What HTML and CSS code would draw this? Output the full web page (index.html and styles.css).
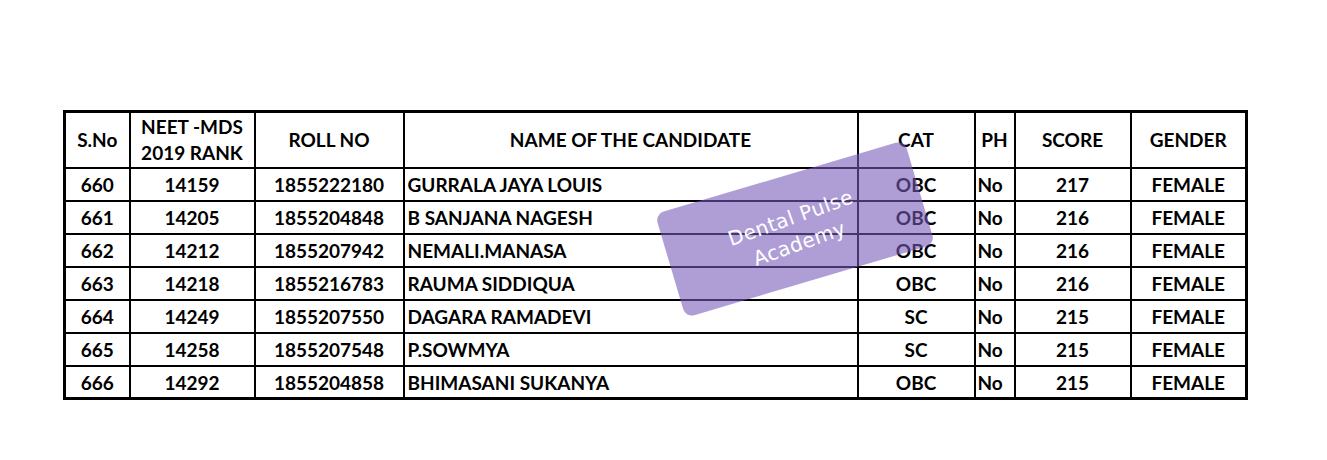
FILE: index.html
```html
<!DOCTYPE html>
<html>
<head>
<meta charset="utf-8">
<link rel="stylesheet" href="styles.css">
</head>
<body>
<div class="page">
  <table class="results">
    <colgroup>
      <col class="c-sno"><col class="c-rank"><col class="c-roll"><col class="c-name"><col class="c-cat"><col class="c-ph"><col class="c-score"><col class="c-gender">
    </colgroup>
    <thead>
      <tr class="head">
        <th>S.No</th>
        <th>NEET -MDS<br>2019 RANK</th>
        <th>ROLL NO</th>
        <th>NAME OF THE CANDIDATE</th>
        <th>CAT</th>
        <th>PH</th>
        <th>SCORE</th>
        <th>GENDER</th>
      </tr>
    </thead>
    <tbody>
      <tr><td>660</td><td>14159</td><td>1855222180</td><td class="name">GURRALA JAYA LOUIS</td><td>OBC</td><td class="ph">No</td><td>217</td><td>FEMALE</td></tr>
      <tr><td>661</td><td>14205</td><td>1855204848</td><td class="name">B SANJANA NAGESH</td><td>OBC</td><td class="ph">No</td><td>216</td><td>FEMALE</td></tr>
      <tr><td>662</td><td>14212</td><td>1855207942</td><td class="name">NEMALI.MANASA</td><td>OBC</td><td class="ph">No</td><td>216</td><td>FEMALE</td></tr>
      <tr><td>663</td><td>14218</td><td>1855216783</td><td class="name">RAUMA SIDDIQUA</td><td>OBC</td><td class="ph">No</td><td>216</td><td>FEMALE</td></tr>
      <tr><td>664</td><td>14249</td><td>1855207550</td><td class="name">DAGARA RAMADEVI</td><td>SC</td><td class="ph">No</td><td>215</td><td>FEMALE</td></tr>
      <tr><td>665</td><td>14258</td><td>1855207548</td><td class="name">P.SOWMYA</td><td>SC</td><td class="ph">No</td><td>215</td><td>FEMALE</td></tr>
      <tr><td>666</td><td>14292</td><td>1855204858</td><td class="name">BHIMASANI SUKANYA</td><td>OBC</td><td class="ph">No</td><td>215</td><td>FEMALE</td></tr>
    </tbody>
  </table>
  <div class="stamp">
    <span class="stamp-text">Dental Pulse<br>Academy</span>
  </div>
</div>
</body>
</html>
```

FILE: styles.css
```css
html, body {
  margin: 0;
  padding: 0;
  background: #ffffff;
}
.page {
  position: relative;
  width: 1327px;
  height: 460px;
  padding: 110px 0 0 63px;
  box-sizing: border-box;
}
.results {
  border-collapse: collapse;
  table-layout: fixed;
  width: 1185px;
  border: 3px solid #000;
  font-family: "Lato", "Liberation Sans", sans-serif;
  font-weight: 700;
  font-size: 19px;
  color: #000;
}
.c-sno { width: 65px; }
.c-rank { width: 125px; }
.c-roll { width: 149px; }
.c-name { width: 454px; }
.c-cat { width: 117px; }
.c-ph { width: 40px; }
.c-score { width: 116px; }
.c-gender { width: 116px; }
.results th,
.results td {
  border: 2px solid #000;
  padding: 0 3px;
  text-align: center;
  vertical-align: middle;
  white-space: nowrap;
  overflow: hidden;
  line-height: 26px;
}
.results th { font-weight: 700; }
.head { height: 56px; }
.results tbody tr { height: 33px; }
.results tbody td { padding-top: 2px; }
.results td.name,
.results td.ph {
  text-align: left;
}
.results td.ph { padding-left: 2px; }
.stamp {
  position: absolute;
  left: 665px;
  top: 175px;
  width: 260px;
  height: 108px;
  border-radius: 9px;
  background: rgba(119, 90, 186, 0.59);
  transform: rotate(-16.5deg);
  display: flex;
  align-items: center;
  justify-content: center;
}
.stamp-text {
  color: #ffffff;
  font-family: "DejaVu Sans", sans-serif;
  font-weight: 400;
  font-size: 20px;
  line-height: 27px;
  text-align: center;
  letter-spacing: 0.5px;
  transform: rotate(-3deg);
  margin-top: 4px;
}
```
